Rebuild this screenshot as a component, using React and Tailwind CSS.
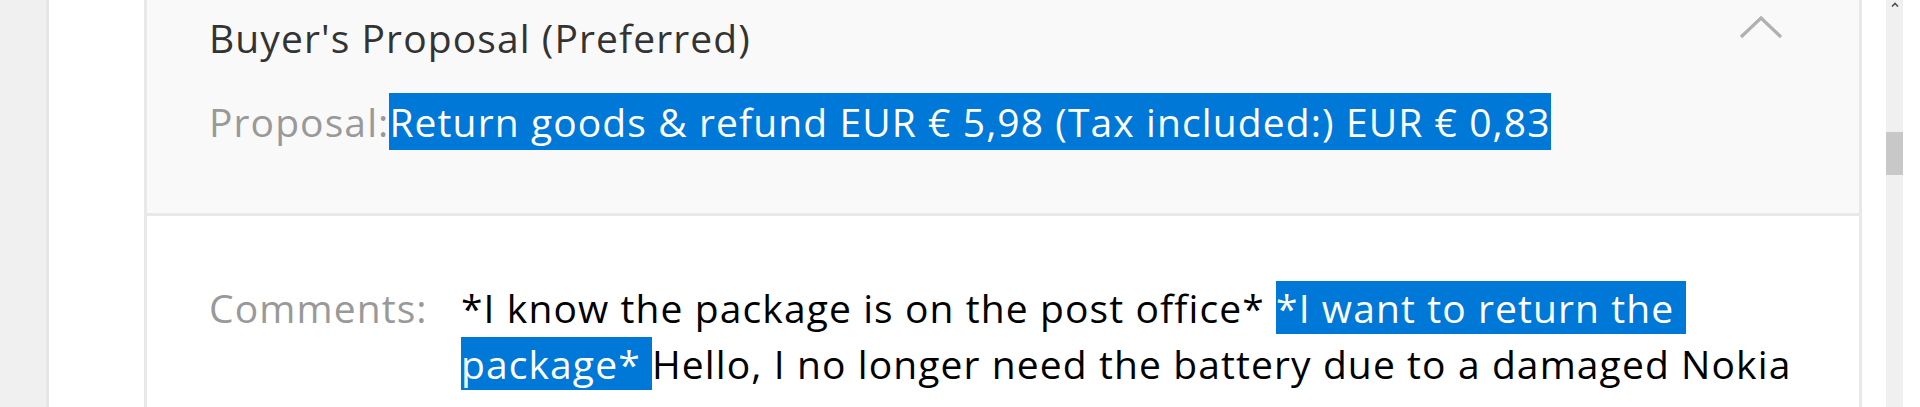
export default function App() {
  return (
    <div className="flex h-[407px] overflow-hidden bg-white font-['Open_Sans',sans-serif]">
      {/* page gutter */}
      <div className="w-[46px] flex-none bg-[#f0f0f0]" />
      <div className="w-[98px] flex-none border-l-[3px] border-[#e6e6e6] bg-white" />

      {/* proposal panel */}
      <div className="flex w-[1718px] flex-none flex-col border-x-[3px] border-[#e8e8e8]">
        <div className="flex border-b-[3px] border-[#e8e8e8] bg-[#f9f9f9] pb-[63px] pl-[62px] pr-[76px] pt-[10px]">
          <div className="flex-1 text-[39px] leading-[56px] tracking-[1.1px]">
            <h3 className="text-[#333]">Buyer's Proposal (Preferred)</h3>
            <p className="mt-[28px] text-[#999]">
              Proposal:<span className="bg-[#0078d7] py-[2px] text-white">Return goods &amp; refund EUR € 5,98 (Tax included:) EUR € 0,83</span>
            </p>
          </div>
          <svg className="mt-[5px] h-[24px] w-[44px] flex-none" viewBox="0 0 44 24" fill="none">
            <polyline points="2,22 22,3 42,22" stroke="#b0b0b0" strokeWidth="3.2" />
          </svg>
        </div>

        <div className="flex-1 bg-white pl-[62px] pr-[40px] pt-[64px]">
          <div className="flex text-[39px] leading-[56px] tracking-[1.1px]">
            <div className="w-[252px] flex-none text-[#999]">Comments:</div>
            <p className="flex-1 whitespace-pre-wrap text-black">
              *I know the package is on the post office* <span className="bg-[#0078d7] text-white">*I want to return the </span><span className="bg-[#0078d7] text-white">package* </span>Hello, I no longer need the battery due to a damaged Nokia
            </p>
          </div>
        </div>
      </div>

      <div className="w-[24px] flex-none bg-white" />

      {/* scrollbar */}
      <div className="flex w-[17px] flex-none flex-col items-center bg-[#f0f0f0]">
        <svg className="mt-[2px] h-[5px] w-[8px]" viewBox="0 0 8 5" fill="none">
          <polyline points="1,4.5 4,1.5 7,4.5" stroke="#505050" strokeWidth="1.6" />
        </svg>
        <div className="mt-[125px] h-[43px] w-full bg-[#c8c8c8]" />
      </div>
      <div className="flex-1 bg-white" />
    </div>
  )
}
